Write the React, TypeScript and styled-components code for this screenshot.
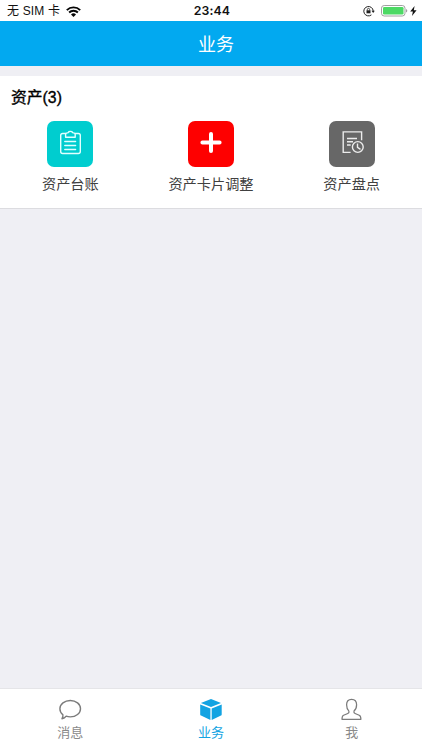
import React from 'react';
import styled, { createGlobalStyle } from 'styled-components';

const GlobalStyle = createGlobalStyle`
  * { box-sizing: border-box; }
  body {
    margin: 0;
    background: #efeff4;
    font-family: "Liberation Sans", "Noto Sans CJK SC", sans-serif;
  }
  svg { display: block; flex: none; }
`;

const Screen = styled.div`
  display: flex;
  flex-direction: column;
  width: 100%;
  height: 100vh;
  min-height: 750px;
  overflow: hidden;
`;

const StatusBar = styled.div`
  display: grid;
  grid-template-columns: 1fr auto 1fr;
  align-items: center;
  height: 21px;
  flex: none;
  padding: 1px 5px 0 7px;
  background: #fff;
  color: #111;
`;

const Carrier = styled.div`
  display: flex;
  align-items: center;
  gap: 6px;
  font-size: 12px;
  letter-spacing: 0.15px;
  line-height: 20px;
  white-space: nowrap;
`;

const Clock = styled.div`
  font: 600 12.3px/20px Inter, sans-serif;
  letter-spacing: 0.1px;
`;

const Indicators = styled.div`
  display: flex;
  justify-content: flex-end;
  align-items: center;
`;

const Header = styled.header`
  height: 45px;
  flex: none;
  padding: 2px 0 0 10px;
  background: #02a9f0;
  color: #fff;
  font-size: 18px;
  font-weight: 400;
  line-height: 45px;
  text-align: center;
`;

const Section = styled.section`
  height: 133px;
  flex: none;
  margin-top: 10px;
  background: #fff;
  border-bottom: 1px solid #dcdce0;
`;

const SectionTitle = styled.h2`
  margin: 0;
  padding: 9px 0 0 11px;
  height: 45px;
  color: #000;
  font-size: 15.8px;
  font-weight: 400;
  line-height: 25px;
  -webkit-text-stroke: 0.35px #000;
`;

const AppGrid = styled.div`
  display: grid;
  grid-template-columns: repeat(3, 1fr);
`;

const AppItem = styled.div`
  display: flex;
  flex-direction: column;
  align-items: center;
`;

const Tile = styled.div<{ $color: string }>`
  display: flex;
  align-items: center;
  justify-content: center;
  width: 46px;
  height: 46px;
  border-radius: 7px;
  background: ${({ $color }) => $color};
`;

const AppLabel = styled.span`
  margin-top: 6px;
  color: #404040;
  font-size: 14.2px;
  line-height: 22px;
  font-weight: 400;
`;

const TabBar = styled.nav`
  display: grid;
  grid-template-columns: repeat(3, 1fr);
  height: 62px;
  flex: none;
  margin-top: auto;
  background: #fff;
  border-top: 1px solid #e5e5e8;
`;

const Tab = styled.div<{ $active?: boolean }>`
  display: flex;
  flex-direction: column;
  align-items: center;
  padding-top: 8px;
  color: ${({ $active }) => ($active ? '#12a3e2' : '#8a8a8a')};
  font-size: 13px;
  line-height: 19px;
  font-weight: 400;
`;

const TabLabel = styled.span`
  margin-top: 0;
`;

const WifiIcon = () => (
  <svg width="15" height="11" viewBox="0 0 15 11" fill="none" stroke="#050505" strokeWidth="1.9">
    <path d="M.8 4.1a9.6 9.6 0 0 1 13.4 0M3.1 6.5a6.3 6.3 0 0 1 8.8 0" />
    <path d="M5 8.4a3.6 3.6 0 0 1 5 0L7.5 10.9z" fill="#050505" stroke="none" />
  </svg>
);

const RotationLockIcon = () => (
  <svg width="12" height="12" viewBox="0 0 12 12" fill="none" stroke="#222">
    <path d="M8.4 9.9A4.7 4.7 0 1 1 10.2 6" strokeWidth="1" />
    <path d="M8.5 5.7h3.3L10.2 8z" fill="#222" stroke="none" />
    <path d="M4.3 5.5V4.6a1.2 1.2 0 0 1 2.4 0v.9" strokeWidth=".8" />
    <rect x="3.5" y="5.3" width="4" height="3" fill="#222" stroke="none" />
  </svg>
);

const BatteryIcon = () => (
  <svg width="27" height="12" viewBox="0 0 27 12">
    <rect x=".5" y=".5" width="23.5" height="10.5" rx="2.7" fill="#fff" stroke="#a0a0a0" />
    <rect x="2" y="2" width="20.5" height="7.5" rx="1.3" fill="#4cd964" />
    <path d="M25 4c1.8.5 1.8 3 0 3.5z" fill="#a0a0a0" />
  </svg>
);

const BoltIcon = () => (
  <svg width="7" height="10" viewBox="0 0 7 10">
    <path d="M4.6 0 .2 5.400h2.700L2 10l4.600-5.800H3.800z" fill="#111" />
  </svg>
);

const ClipboardIcon = () => (
  <svg width="46" height="46" viewBox="0 0 46 46" fill="none" stroke="#e2ffff" strokeWidth="1.4" strokeLinejoin="round" strokeLinecap="round">
    <path d="M18.500 12.500h-2.800a2 2 0 0 0-2 2v16a2 2 0 0 0 2 2h15.600a2 2 0 0 0 2-2v-16a2 2 0 0 0-2-2h-2.800" />
    <path d="M18.600 16.200v-2.600c0-1 .6-1.700 1.800-1.700.5 0 .9-.2 1-.6.4-1.300 3.600-1.300 4 0 .1.4.5.6 1 .6 1.200 0 1.800.7 1.800 1.700v2.600z" />
    <path d="M17.800 20.500h10.800M17.800 24.500h10.800M17.800 28.500h10.800" />
  </svg>
);

const PlusIcon = () => (
  <svg width="46" height="46" viewBox="0 0 46 46" stroke="#fff" strokeWidth="4" strokeLinecap="round">
    <path d="M14.400 21.500h17.200M23 12.900v17.200" />
  </svg>
);

const RecordIcon = () => (
  <svg width="46" height="46" viewBox="0 0 46 46" fill="none" stroke="#ececec" strokeWidth="1.4">
    <path d="M21.600 31.400h-7.400V10.900h18.400v8.300" />
    <path d="M18 17.500h10M18 20.700h6M18 24h3.700" />
    <circle cx="28.800" cy="26" r="5.400" />
    <path d="M28.500 22.500v3.800l3 2" />
  </svg>
);

const ChatIcon = () => (
  <svg width="24" height="26" viewBox="0 0 24 26" fill="none" stroke="#7b7b7b" strokeWidth="1.4" strokeLinejoin="round">
    <path d="M12.300 3.500c5.700 0 10.200 3.600 10.200 8.200s-4.500 8.200-10.200 8.200c-1.500 0-2.900-.2-4.100-.7-1.100 1.500-2.500 2.300-4.200 2.500.8-1.200 1.100-2.500.9-4C3 16.200 1.900 14.100 1.900 11.700c0-4.600 4.700-8.200 10.400-8.200z" />
  </svg>
);

const CubeIcon = () => (
  <svg width="24" height="26" viewBox="0 0 24 26" fill="#12a3e2">
    <path d="M12 1.900 22 6 12 10.100 1.900 6zM1.200 7.400l10.200 4.100v11.400L2 18.600q-.8-.4-.8-1.200zM12.700 11.500l10-4.100v10q0 .8-.7 1.200l-9.300 4.300z" />
  </svg>
);

const PersonIcon = () => (
  <svg width="24" height="26" viewBox="0 0 24 26" fill="none" stroke="#7b7b7b" strokeWidth="1.250" strokeLinejoin="round">
    <path d="M11.600 2.400c-3.200 0-5 2.200-5 5.400 0 2.600.8 5 2.300 6.300.3 1.100 0 1.900-1.100 2.400l-4.200 1.800c-1.400.6-1.600 1.700-1.600 4h18.900c0-2.300-.3-3.400-1.700-4l-4.100-1.800c-1.100-.5-1.400-1.300-1.100-2.400 1.600-1.300 2.600-3.700 2.600-6.300 0-3.200-1.800-5.400-5-5.400z" />
  </svg>
);

const apps = [
  { label: '资产台账', color: '#00cdcf', Icon: ClipboardIcon },
  { label: '资产卡片调整', color: '#fe0000', Icon: PlusIcon },
  { label: '资产盘点', color: '#676767', Icon: RecordIcon },
];

const tabs = [
  { label: '消息', Icon: ChatIcon },
  { label: '业务', Icon: CubeIcon, active: true },
  { label: '我', Icon: PersonIcon },
];

const LockSlot = styled.span`
  margin-right: 6px;
`;

const BatterySlot = styled.span`
  margin-right: 2px;
`;

export default function App() {
  return (
    <>
      <GlobalStyle />
      <Screen>
        <StatusBar>
          <Carrier>无 SIM 卡 <WifiIcon /></Carrier>
          <Clock>23:44</Clock>
          <Indicators>
            <LockSlot><RotationLockIcon /></LockSlot>
            <BatterySlot><BatteryIcon /></BatterySlot>
            <BoltIcon />
          </Indicators>
        </StatusBar>
        <Header>业务</Header>
        <Section>
          <SectionTitle>资产(3)</SectionTitle>
          <AppGrid>
            {apps.map(({ label, color, Icon }) => (
              <AppItem key={label}>
                <Tile $color={color}><Icon /></Tile>
                <AppLabel>{label}</AppLabel>
              </AppItem>
            ))}
          </AppGrid>
        </Section>
        <TabBar>
          {tabs.map(({ label, Icon, active }) => (
            <Tab key={label} $active={active}>
              <Icon />
              <TabLabel>{label}</TabLabel>
            </Tab>
          ))}
        </TabBar>
      </Screen>
    </>
  );
}
